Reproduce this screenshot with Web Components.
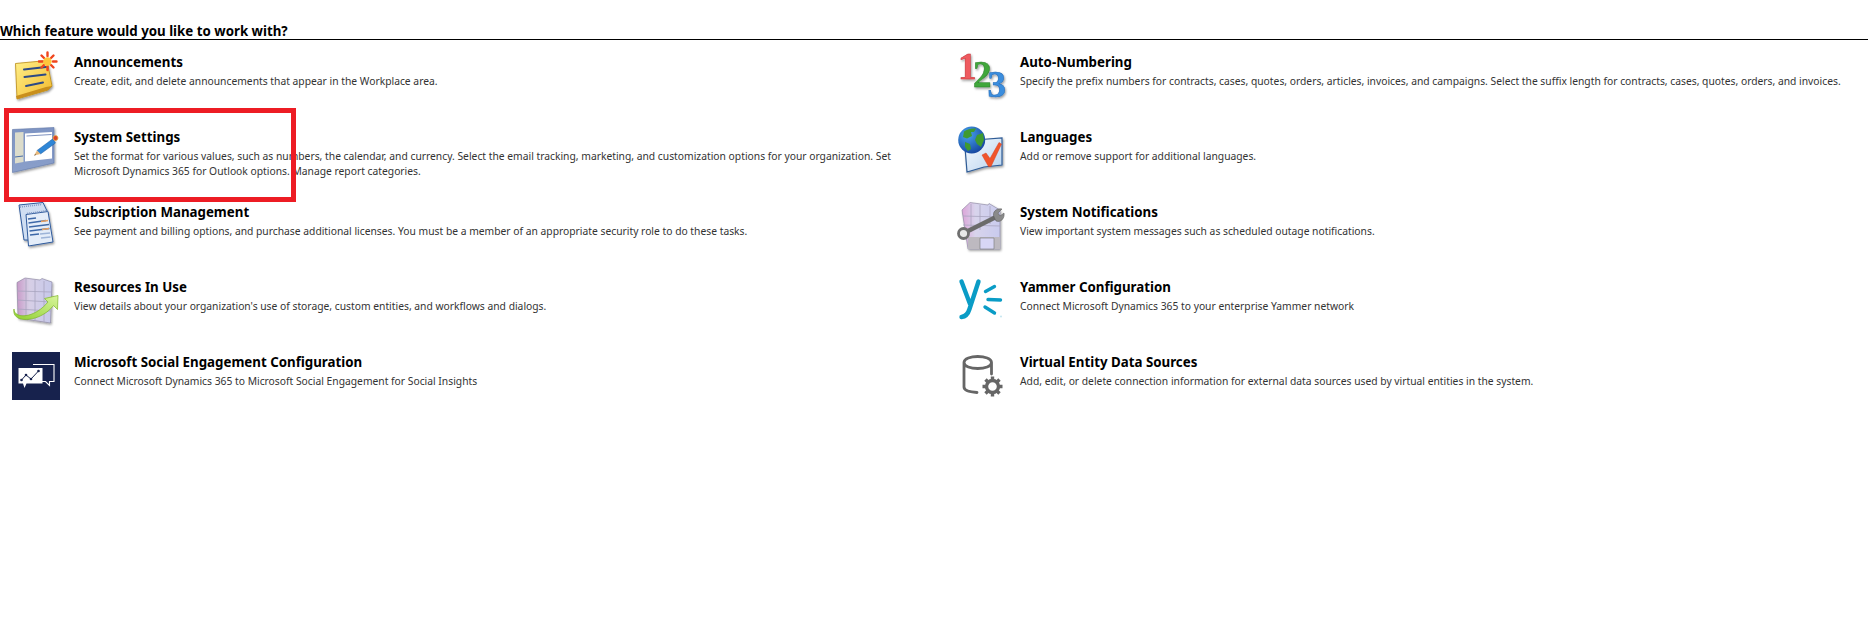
<!DOCTYPE html>
<html><head><meta charset="utf-8"><title>Features</title>
<style>
html,body{margin:0;padding:0;background:#fff}
body{font-family:"Noto Sans","Open Sans",sans-serif;height:633px;overflow:hidden}
</style></head><body>
<feature-page heading="Which feature would you like to work with?">
  <feature-item label="Announcements" icon="announce">Create, edit, and delete announcements that appear in the Workplace area.</feature-item>
  <feature-item label="Auto-Numbering" icon="numbers">Specify the prefix numbers for contracts, cases, quotes, orders, articles, invoices, and campaigns. Select the suffix length for contracts, cases, quotes, orders, and invoices.</feature-item>
  <feature-item label="System Settings" icon="settings">Set the format for various values, such as numbers, the calendar, and currency. Select the email tracking, marketing, and customization options for your organization. Set Microsoft Dynamics 365 for Outlook options. Manage report categories.</feature-item>
  <feature-item label="Languages" icon="languages">Add or remove support for additional languages.</feature-item>
  <feature-item label="Subscription Management" icon="subscription">See payment and billing options, and purchase additional licenses. You must be a member of an appropriate security role to do these tasks.</feature-item>
  <feature-item label="System Notifications" icon="notifications">View important system messages such as scheduled outage notifications.</feature-item>
  <feature-item label="Resources In Use" icon="resources">View details about your organization's use of storage, custom entities, and workflows and dialogs.</feature-item>
  <feature-item label="Yammer Configuration" icon="yammer">Connect Microsoft Dynamics 365 to your enterprise Yammer network</feature-item>
  <feature-item label="Microsoft Social Engagement Configuration" icon="social">Connect Microsoft Dynamics 365 to Microsoft Social Engagement for Social Insights</feature-item>
  <feature-item label="Virtual Entity Data Sources" icon="virtual">Add, edit, or delete connection information for external data sources used by virtual entities in the system.</feature-item>
  <callout-box></callout-box>
</feature-page>
<script>
const DEFS=`<defs><filter id="s" x="-20%" y="-20%" width="150%" height="150%"><feDropShadow dx="1" dy="1.5" stdDeviation="1" flood-color="#000" flood-opacity=".4"/></filter></defs>`;
const ICONS={
announce:`<linearGradient id="a" x1="0" y1="0" x2="1" y2="1"><stop offset="0" stop-color="#fff08a"/><stop offset="1" stop-color="#f2b92c"/></linearGradient>
<g filter="url(#s)"><path d="M3.5 11.5 35 8.500 40 34 36 38 5 47Z" fill="url(#a)" stroke="#b98a14" stroke-width=".8"/><path d="M5 47 4 44 34 35 40 34 36 38Z" fill="#c98f1c"/></g>
<path d="M12 17.500 34 15M12.500 25 33.500 22.500M14 34 31 30.500" stroke="#2c4a86" stroke-width="2" stroke-linecap="round"/>
<g stroke="#f0451d" stroke-width="2.400" stroke-linecap="round"><path d="M35.500 .5V4M35.500 14.500V18M27 9.500H30.500M41 9.500H44.500M29.500 3.500 32 6M39 13 41.500 15.500M41.500 3.500 39 6M32 13 29.500 15.500"/></g><circle cx="35.500" cy="9.500" r="4.200" fill="#ffc63b"/>`,
settings:`<linearGradient id="b" x1="0" y1="0" x2="0" y2="1"><stop offset="0" stop-color="#7e94c3"/><stop offset="1" stop-color="#8a9fca"/></linearGradient>
<g filter="url(#s)"><path d="M.5 2.500 42 .5V36L.5 45.500Z" fill="url(#b)" stroke="#5f77a8" stroke-width=".6"/></g>
<path d="M3 5.500 11.500 5V35L3 36.500Z" fill="#dcdccb"/><path d="M3 30 11 29" stroke="#4a6ea8" stroke-width="1"/>
<path d="M13 6.500 40 5V31.500L13 34.500Z" fill="#fff"/><path d="M14.500 9 39.500 7.500" stroke="#7f93c0" stroke-width="1"/>
<path d="M25 23.500 40.500 12 43.500 16 28.500 27Z" fill="#2f86d6" stroke="#1a5aa0" stroke-width=".5"/><path d="M25 23.500 28.500 27 22 28.500Z" fill="#e8b87a"/><path d="M23.200 27.200 22 28.500 24 28Z" fill="#333"/><circle cx="43.500" cy="11" r="2.500" fill="#d9432a" stroke="#e7b04a" stroke-width=".8"/>`,
subscription:`<g filter="url(#s)"><path d="M7 3 31 .5 36 11 17 38H12Z" fill="#cfdef2" stroke="#2e5a9c" stroke-width="1"/><path d="M14 12.500 36 9.500 41 40 16.500 44Z" fill="#e4edf9" stroke="#2e5a9c" stroke-width="1"/></g>
<path d="M8 5 30 2.500M15 11.500 36 8.500" stroke="#8099c4" stroke-width="1.500" stroke-dasharray="1 1"/>
<g stroke="#3d68a8" stroke-width="1.600"><path d="M16 17 24 16M16.500 21 34 18.500M17 25 37 22.500M17.500 29 37.500 26.500M18 33 27 32"/></g><path d="M29 19.500 36 18.500M30 27.500 37 26.500" stroke="#e8a060" stroke-width="1.600"/><path d="M28 32 38 31M29 36 38.500 35" stroke="#9db4d8" stroke-width="1.600"/>`,
resources:`<linearGradient id="r" x1="0" y1="0" x2="1" y2="0"><stop offset="0" stop-color="#c89ac8"/><stop offset=".35" stop-color="#d7cfe6"/><stop offset="1" stop-color="#c6c8ea"/></linearGradient><linearGradient id="g" x1="0" y1="1" x2="1" y2="0"><stop offset="0" stop-color="#8fcf30"/><stop offset="1" stop-color="#d8f59c"/></linearGradient>
<g filter="url(#s)"><path d="M5 5.500 13 1 28 3 30 1.500 34 3 40 5 38.500 46 6 41Z" fill="url(#r)" stroke="#85809a" stroke-width=".6"/></g>
<g stroke="#a8a4bf" stroke-width=".8" fill="none"><path d="M14 2V43M23 3V44M32 4V45M5 14 39.500 15M5 23 39 25M5 32 39 34"/></g>
<path d="M2 32C2 42 22 42 36 25L32.500 21.500 46 18.500 45.500 32.500 41.500 28.500C28 46-1 47 2 32Z" fill="url(#g)" stroke="#7cb526" stroke-width=".7"/>`,
social:`<rect width="48" height="48" fill="#17224d"/><path d="M21 12.500H42V29.500H37.500V33.500L33.500 29.500H24" fill="none" stroke="#fff" stroke-width="1.100"/><path d="M6.500 16H30.500V31.500H14.500L12.500 36 11 31.500H6.500Z" fill="#fff"/><path d="M9.500 28 14 23 19 27 26.500 19" fill="none" stroke="#17224d" stroke-width="1"/><g fill="#17224d"><circle cx="9.500" cy="28" r="1.300"/><circle cx="14" cy="23" r="1.300"/><circle cx="19" cy="27" r="1.300"/><circle cx="26.500" cy="19" r="1.300"/></g>`,
numbers:`<text font-family="Liberation Serif,serif" font-weight="700" font-size="37" text-anchor="middle" stroke-width=".5" filter="url(#s)"><tspan x="9.300" y="27.300" fill="#ef5a5e" stroke="#c23237">1</tspan><tspan x="24.300" y="34.700" fill="#3fa73a" stroke="#2a7f2a">2</tspan><tspan x="38.700" y="44.700" fill="#3b8ede" stroke="#2469b4">3</tspan></text>`,
languages:`<linearGradient id="l" x1="0" y1="0" x2="1" y2="1"><stop offset="0" stop-color="#f7fbff"/><stop offset="1" stop-color="#b9d3ee"/></linearGradient><radialGradient id="w" cx=".35" cy=".3" r=".8"><stop offset="0" stop-color="#48a4ee"/><stop offset="1" stop-color="#123f9a"/></radialGradient>
<g filter="url(#s)"><path d="M17 13 44 11V38L26 40 9 45 7 20Z" fill="url(#l)" stroke="#2f5c96" stroke-width="1.200"/></g><path d="M24 28 28 26 32 31.500 41 15.500 43.500 17 33 39.500H30.500Z" fill="#f0552c" stroke="#d9401c" stroke-width=".5"/>
<circle cx="13.700" cy="13" r="13.500" fill="url(#w)"/><path d="M6 4.500C9 2 15 1 18 1.500L16 5 13 5 14 9 9 11.500 5 10ZM19 8 25 6 26 13 23 20 19 17 17 13ZM7 15 12 17 13 22 10 24 7 20Z" fill="#3f9a30"/>`,
notifications:`<linearGradient id="n" x1="0" y1="0" x2="1" y2="0"><stop offset="0" stop-color="#dca4d8"/><stop offset=".35" stop-color="#d8d4ec"/><stop offset="1" stop-color="#c9cbee"/></linearGradient>
<g filter="url(#s)"><path d="M4 8 12 .5 30 3 31 1.500 42 8 42 47H10Z" fill="url(#n)" stroke="#85809a" stroke-width=".6"/></g><g stroke="#a8a4bf" stroke-width=".8" fill="none"><path d="M13 2V30M22 3V28M32 4V22M5 14 42 15M5 23 42 24"/></g>
<path d="M10 35H42V47H10Z" fill="#bdb9c0"/><path d="M22 36H36V47H22Z" fill="#d8d6f5" stroke="#777" stroke-width=".6"/>
<path d="M6 31 38 15" stroke="#6b6b6b" stroke-width="4.500"/><circle cx="5.500" cy="31.500" r="5" fill="#e8e8e8" stroke="#6f6f6f" stroke-width="2.800"/><path d="M36 15C34 10 38 6 44 7L40 11 42 14 46 11C47 16 43 21 38 19Z" fill="#8a8a8a" stroke="#555" stroke-width=".5"/>`,
yammer:`<g fill="none" stroke="#0a9cc6" stroke-width="4.400" stroke-linecap="round"><path d="M3.500 4.500 12 27M20.500 4.500 11.500 32C10 37 8 39.500 3.500 40"/><path d="M27.500 14.500 36.500 9.500M30 22.500 42.500 23M27 30 36.500 36" stroke-width="3.400"/></g><circle cx="43" cy="39.500" r=".9" fill="#bfe3ee"/>`,
virtual:`<g fill="none" stroke="#666" stroke-width="2.800" stroke-linecap="round"><path d="M6 10.500C6 2.500 33.500 2.500 33.500 10.500C33.500 18.500 6 18.500 6 10.500V35C6 38.500 12 40 19 40.500M33.500 10.500V22"/></g>
<g transform="translate(34.500 34.500)"><circle r="6" fill="none" stroke="#666" stroke-width="3.400"/><g stroke="#666" stroke-width="3.400"><path d="M0-10V-6M0 6V10M-10 0H-6M6 0H10M-7-7-4.300-4.300M4.300 4.300 7 7M7-7 4.300-4.300M-4.300 4.300-7 7"/></g></g>`
};
class FeatureIcon extends HTMLElement{
  constructor(){super();this.attachShadow({mode:'open'}).innerHTML=`<style>:host{display:block;width:48px;height:48px;flex:none}svg{display:block;overflow:visible;filter:blur(.3px)}</style><svg width="48" height="48" viewBox="0 0 48 48">${DEFS}${ICONS[this.getAttribute('name')]||''}</svg>`}
}
customElements.define('feature-icon',FeatureIcon);
class FeatureItem extends HTMLElement{
  constructor(){super();const name=this.getAttribute('icon');this.attachShadow({mode:'open'}).innerHTML=`<style>
  :host{display:flex;box-sizing:border-box;height:75px;padding:12px 0 0 12px;gap:14px;align-items:flex-start}
  .t{font-weight:700;font-size:13.300px;line-height:16px;color:#000;margin-top:2px}
  .d{font-size:10.300px;line-height:15px;color:#333;margin-top:4px;max-width:830px}
  </style><feature-icon name="${name}"></feature-icon><div><div class="t">${this.getAttribute('label')}</div><div class="d"><slot></slot></div></div>`}
}
customElements.define('feature-item',FeatureItem);
class CalloutBox extends HTMLElement{
  constructor(){super();this.attachShadow({mode:'open'}).innerHTML=`<style>:host{position:absolute;left:4px;top:108px;width:292px;height:94px;box-sizing:border-box;border:5px solid #ed1c24}</style>`}
}
customElements.define('callout-box',CalloutBox);
class FeaturePage extends HTMLElement{
  constructor(){super();this.attachShadow({mode:'open'}).innerHTML=`<style>
  :host{display:block;position:relative;height:633px}
  h1{margin:0;padding-top:23px;height:16px;font-size:13.300px;line-height:16px;font-weight:700;color:#000;border-bottom:1px solid #000}
  .g{display:grid;grid-template-columns:946px 922px}
  </style><h1>${this.getAttribute('heading')}</h1><div class="g"><slot></slot></div>`}
}
customElements.define('feature-page',FeaturePage);
</script></body></html>
